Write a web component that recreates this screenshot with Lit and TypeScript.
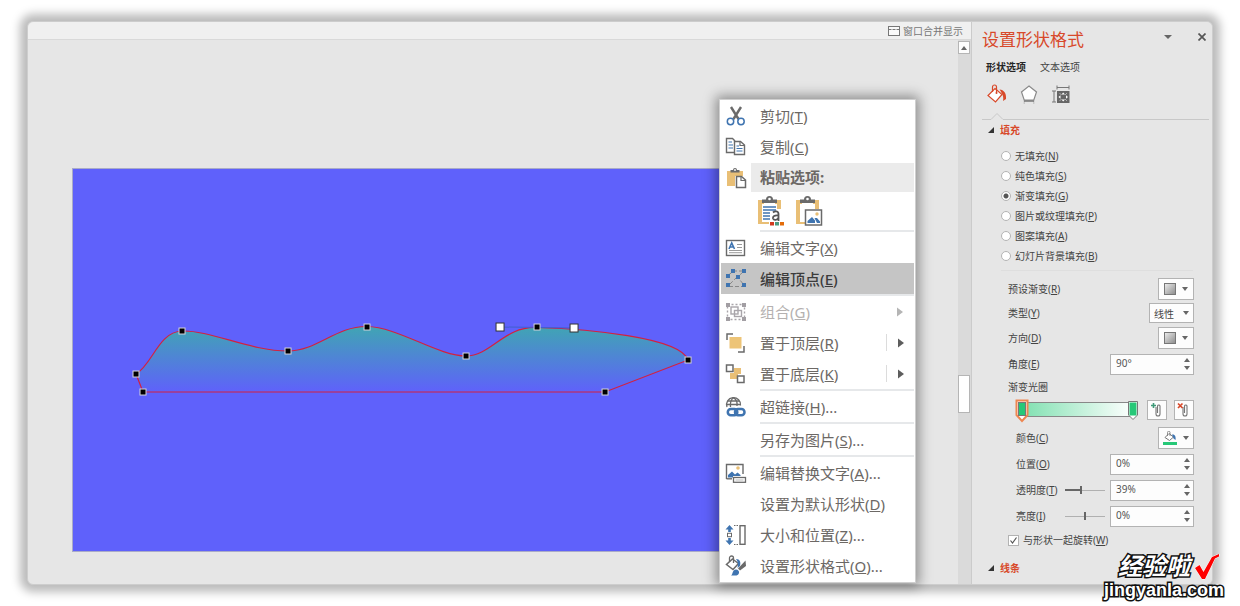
import { LitElement, html, css, svg, nothing } from "lit";
import { customElement, state } from "lit/decorators.js";
import { classMap } from "lit/directives/class-map.js";

const BLUE = "#3f74b0";
const GRAY = "#6a6a6a";
const TAN = "#e9bf76";

const icons: Record<string, unknown> = {
  cut: svg`<path d="M6 2L13.500 14M16 2L8.500 14" stroke=${GRAY} stroke-width="2.400" fill="none"/>
    <circle cx="5.500" cy="16.500" r="3.200" fill="none" stroke=${BLUE} stroke-width="1.500"/>
    <circle cx="16" cy="16.500" r="3.200" fill="none" stroke=${BLUE} stroke-width="1.500"/>`,
  copy: svg`<path d="M9 16.500H1.500V2.500H7.500L10 5" fill="none" stroke=${GRAY} stroke-width="1.400"/>
    <path d="M3.500 6H7M3.500 9H8M3.500 12H8" stroke=${BLUE} stroke-width="1.200"/>
    <path d="M9.500 5.500H15.500L19.500 9V18.500H9.500Z" fill="#fff" stroke=${GRAY} stroke-width="1.400"/>
    <path d="M15 5.500V9.500H19.500" fill="none" stroke=${GRAY} stroke-width="1.200"/>
    <path d="M11.500 10H14M11.500 12.500H17.500M11.500 15H17.500" stroke=${BLUE} stroke-width="1.200"/>`,
  paste: svg`<path d="M2 4H18V9H10V19H2Z" fill=${TAN}/><path d="M5.500 5.500V3H8A2 2 0 0 1 12 3H14.500V5.500Z" fill=${GRAY}/>
    <circle cx="10" cy="3" r=".9" fill="#fff"/>
    <path d="M11.500 9.500H16.500L20.500 13V20.500H11.500Z" fill="#fff" stroke=${GRAY} stroke-width="1.500"/>
    <path d="M16 9.500V13.500H20.500" fill="none" stroke=${GRAY} stroke-width="1.200"/>`,
  text: svg`<rect x="1.500" y="3.500" width="18" height="15" fill="#fff" stroke=${GRAY} stroke-width="1.400"/>
    <path d="M4 12L6.700 6L9.500 12M5 10H8.500" fill="none" stroke=${BLUE} stroke-width="1.600"/>
    <path d="M12 7.500H17M12 10.500H17M4 13.500H17M4 15.700H17" stroke="#9a9a9a" stroke-width="1"/>`,
  points: svg`<path d="M3.500 7L8 3.500M8 3H19M18 4L12.500 9L19 17M12 9L4 17M4 18.500H19" fill="none" stroke="#888" stroke-dasharray="4 2"/>
    <g fill=${BLUE}><rect x="6" y="1" width="4" height="4"/><rect x="17" y="1" width="4" height="4"/><rect x="1" y="6" width="4" height="4"/><rect x="11" y="7" width="4" height="4"/><rect x="1" y="15" width="4" height="4"/><rect x="17" y="15" width="4" height="4"/></g>`,
  group: svg`<g fill="none" stroke="#a9a5aa" stroke-width="1.400"><rect x="2.500" y="3.500" width="17" height="15" stroke-dasharray="2 2"/><rect x="6" y="6" width="7" height="7"/><rect x="9.500" y="9.500" width="7" height="6"/></g>
    <g fill="#a29ea3"><rect x="1" y="2" width="4" height="4"/><rect x="17" y="2" width="4" height="4"/><rect x="1" y="16" width="4" height="4"/><rect x="17" y="16" width="4" height="4"/></g>`,
  front: svg`<path d="M2 8V2H8M19 14V20H13" fill="none" stroke=${GRAY} stroke-width="1.500"/>
    <rect x="4.500" y="5" width="12" height="11.500" fill="#edc477"/>`,
  back: svg`<path d="M9 5H16V11H13V16H5V10H9Z" fill=${TAN}/>
    <g fill="#fff" stroke=${GRAY} stroke-width="1.500"><rect x="1.500" y="2" width="6.500" height="6.500"/><rect x="12.500" y="13" width="6.500" height="6.500"/></g>`,
  link: svg`<g fill="none" stroke=${GRAY} stroke-width="1.300"><path d="M2 11A7 7 0 1 1 15.500 9.500"/><path d="M5.500 11C5 6 6.500 3 8.700 1.800C11 3 12.500 6 12 10M2 8.500H15.500M3 5H14"/></g>
    <g fill="none" stroke=${BLUE} stroke-width="2.500"><rect x="2.800" y="13" width="9.500" height="6.200" rx="3"/><rect x="10" y="13" width="9.500" height="6.200" rx="3"/></g>`,
  alt: svg`<path d="M1.500 17V2.500H18V12" fill="none" stroke=${GRAY} stroke-width="1.400"/><path d="M1.500 16.800H7" stroke=${GRAY} stroke-width="1.400"/>
    <circle cx="13" cy="6" r="1.800" fill=${TAN}/><path d="M3 15.500V13L7 9.500L10 12.500L12.500 10.500L15.500 13V14H8V15.500Z" fill=${BLUE}/>
    <rect x="8.500" y="15.500" width="12" height="4.800" fill="#fff" stroke=${GRAY} stroke-width="1.300"/><path d="M10.500 18H18.500" stroke="#bbb"/>`,
  size: svg`<path d="M4.500 1L8.500 5.500H5.800V8H3.200V5.500H.5ZM4.500 21L8.500 16.500H5.800V14H3.200V16.500H.5Z" fill=${BLUE}/>
    <rect x="2.500" y="9.300" width="4" height="3.400" fill="#fff" stroke=${GRAY}/><path d="M9 1.500H14M9 20.500H14" stroke=${GRAY} stroke-dasharray="1.500 1"/>
    <rect x="15" y="1.700" width="5" height="18.600" fill="#fff" stroke=${GRAY} stroke-width="1.400"/>`,
  format: svg`<path d="M7.500 4L13.500 8.500L8 14.500L1.500 9.500Z" fill="#fff" stroke=${GRAY} stroke-width="1.500"/><path d="M4.500 7V3A2 2 0 0 1 8.500 3V8" fill="none" stroke=${GRAY} stroke-width="1.300"/>
    <path d="M11 4C15 4 16 7 15 11L12.500 13C13.500 9 13 7 11 4Z" fill=${BLUE}/><path d="M20.500 5.500L21 11L15 15.500L13 13.500Z" fill=${GRAY}/>
    <path d="M6 20.500C8 19.500 7 15 11 14.500C15 15 15 19.500 11.500 20.500Z" fill=${BLUE}/>`,
};

type Item = { icon?: string; text: string; key: string; tail?: string; sub?: "plain" | "split"; off?: boolean; on?: boolean; line?: boolean };

const items: Item[] = [
  { icon: "text", text: "编辑文字", key: "X" },
  { icon: "points", text: "编辑顶点", key: "E", on: true, line: true },
  { icon: "group", text: "组合", key: "G", sub: "plain", off: true },
  { icon: "front", text: "置于顶层", key: "R", sub: "split" },
  { icon: "back", text: "置于底层", key: "K", sub: "split", line: true },
  { icon: "link", text: "超链接", key: "H", tail: "...", line: true },
  { text: "另存为图片", key: "S", tail: "...", line: true },
  { icon: "alt", text: "编辑替换文字", key: "A", tail: "..." },
  { text: "设置为默认形状", key: "D" },
  { icon: "size", text: "大小和位置", key: "Z", tail: "..." },
  { icon: "format", text: "设置形状格式", key: "O", tail: "..." },
];

const base = css`
  * { box-sizing: border-box; }
  button, input, select { font: inherit; color: inherit; margin: 0; padding: 0; border: 0; background: none; border-radius: 0; }
  svg { display: block; }
`;

@customElement("context-menu")
class ContextMenu extends LitElement {
  static styles = [base, css`
    :host { display: block; padding: 0 1px 1px; background: #fff; border: 1px solid #cfcfcf; font-size: 15px; line-height: 20px; color: #6c6865; box-shadow: 0 0 12px 3px rgba(0, 0, 0, 0.4); }
    .row { display: grid; grid-template-columns: 30px 1fr auto; align-items: center; width: 100%; height: 31px; text-align: left; white-space: nowrap; }
    .icon { width: 22px; height: 22px; margin-left: 4px; }
    .label { padding-left: 9px; }
    .head .label { grid-column: 2 / -1; height: 29px; line-height: 29px; background: #ebebeb; font-weight: 700; }
    .row.on { background: #c5c5c5; color: #3c3c3c; }
    .row.on .label { font-weight: 500; }
    .row.off { color: #b5b1b0; }
    .line { height: 2px; margin: 0 0 0 39px; border: 0; background: #e6e8ea; }
    .options { display: flex; gap: 8px; height: 37px; padding: 3px 0 0 35px; }
    .options button { width: 30px; height: 32px; }
    .arrow { display: flex; align-items: center; justify-content: center; width: 28px; height: 17px; }
    .split { border-left: 1px solid #dcdcdc; }
  `];

  private icon(name?: string) {
    return name ? html`<svg class="icon" viewBox="0 0 22 22" aria-hidden="true">${icons[name]}</svg>` : html`<span></span>`;
  }

  private item(i: Item) {
    return html`
      <button class=${classMap({ row: true, on: !!i.on, off: !!i.off })} role="menuitem" ?disabled=${!!i.off}>
        ${this.icon(i.icon)}
        <span class="label">${i.text}(<u>${i.key}</u>)${i.tail ?? ""}</span>
        ${i.sub ? html`<span class=${classMap({ arrow: true, split: i.sub === "split" })}><svg width="6" height="10" viewBox="0 0 6 10"><path d="M0 0.500L6 5L0 9.500Z" fill=${i.off ? "#b5b5b5" : "#5d5d5d"}/></svg></span>` : nothing}
      </button>
      ${i.line ? html`<hr class="line">` : nothing}`;
  }

  render() {
    const board = svg`<path d="M2 4H8V8H6V26H13V28H2ZM19 4H25V13H21V8H19Z" fill=${TAN}/><path d="M6 7V3.500H10A3.500 3.500 0 0 1 17 3.500H21V7Z" fill=${GRAY}/><circle cx="13.500" cy="3" r="1.300" fill="#fff"/>`;
    return html`
      ${this.item({ icon: "cut", text: "剪切", key: "T" })}
      ${this.item({ icon: "copy", text: "复制", key: "C" })}
      <div class="row head">${this.icon("paste")}<span class="label">粘贴选项:</span></div>
      <div class="options">
        <button aria-label="保留源格式"><svg width="30" height="32" viewBox="0 0 30 32">${board}
          <path d="M7 11H20M7 14H20M7 17H14M7 20H14M7 23H14" stroke=${BLUE} stroke-width="1.400"/>
          <path d="M17 16.500C19 14.500 22.500 15 22.500 18V25M22.500 19.500C18.500 19 16.500 20.500 17 22.500C18 24.800 21.500 24 22.500 21.500" fill="none" stroke="#555" stroke-width="1.800"/>
          <rect x="14" y="26" width="4" height="3.500" fill="#d13b20"/><rect x="19" y="26" width="4" height="3.500" fill="#4c9a80"/><rect x="24" y="26" width="4" height="3.500" fill="#e36c0a"/></svg></button>
        <button aria-label="图片"><svg width="30" height="32" viewBox="0 0 30 32">${board}
          <rect x="11.500" y="14" width="16" height="15" fill="#fff" stroke=${GRAY} stroke-width="1.500"/><circle cx="23" cy="18" r="1.700" fill=${TAN}/>
          <path d="M13.500 27V25L18 21L21 24.500V27ZM20.500 22H23L26 25.500V27H23Z" fill=${BLUE}/></svg></button>
      </div>
      <hr class="line">
      ${items.map((i) => this.item(i))}`;
  }
}

@customElement("format-pane")
class FormatPane extends LitElement {
  @state() private fill = "G";
  @state() private alpha = 39;

  static styles = [base, css`
    :host { display: block; background: #e6e6e6; border-left: 1px solid #cbcbcb; font-size: 10px; line-height: 20px; color: #444; }
    .title { display: flex; align-items: center; height: 36px; padding-left: 10px; }
    h2 { flex: 1; margin: 0; font-size: 17px; font-weight: 400; color: #d8492a; }
    .caret, .close { display: grid; place-items: center; width: 20px; height: 20px; margin-bottom: 6px; }
    .caret { margin-right: 14px; }
    .tabs { display: flex; gap: 14px; height: 18px; line-height: 18px; padding-left: 14px; }
    .tabs .sel { font-weight: 700; color: #262626; }
    .kinds { display: flex; gap: 12px; height: 36px; padding: 8px 0 0 15px; }
    .kinds button { width: 20px; height: 22px; }
    .notch { display: flex; align-items: flex-end; height: 8px; margin: 0 3px 0 10px; }
    .notch i { height: 1px; background: #c8c8c8; width: 9px; }
    .notch .rest { flex: 1; }
    .section { display: flex; align-items: center; gap: 6px; padding-left: 16px; font-weight: 700; color: #d8492a; }
    .fills { padding: 6px 0 0 29px; border: 0; margin: 0; }
    .fills label { display: flex; align-items: center; gap: 4px; height: 20px; }
    .fills input { appearance: none; width: 10px; height: 10px; border: 1px solid #b4b4b4; border-radius: 50%; background: #fff; }
    .fills input:checked { background: radial-gradient(circle, #555 2px, #fff 3px); }
    .rule { height: 1px; margin: 4px 19px 6px 29px; border: 0; background: #dedede; }
    .row { display: flex; align-items: center; justify-content: space-between; height: 26px; padding: 0 18px 0 36px; }
    .short { height: 24px; }
    .caption { height: 20px; }
    .in { padding-left: 44px; }
    .box { background: #fdfdfd; border: 1px solid #b3b3b3; }
    .pick { display: flex; align-items: center; justify-content: center; gap: 6px; width: 36px; height: 22px; }
    .drop { position: relative; width: 45px; height: 20px; display: grid; align-items: center; }
    .drop select { appearance: none; width: 100%; height: 18px; padding-left: 4px; }
    .drop svg { position: absolute; right: 4px; top: 7px; pointer-events: none; }
    .spin { display: flex; width: 84px; height: 21px; }
    .spin input { flex: 1; min-width: 0; padding-left: 5px; height: 17px; color: #555; }
    .steps { display: grid; width: 13px; padding: 1px 0; }
    .steps button { display: grid; place-items: center; }
    .range { appearance: none; width: 40px; height: 12px; margin: 0 5px 0 auto; background: linear-gradient(#b0b0b0, #b0b0b0) center / 100% 1px no-repeat; }
    .dark { background: linear-gradient(#666, #666) left center / 40% 2px no-repeat, linear-gradient(#b0b0b0, #b0b0b0) center / 100% 1px no-repeat; }
    .range::-webkit-slider-thumb { appearance: none; width: 2px; height: 8px; background: #666; }
    .stops { display: flex; align-items: center; height: 26px; gap: 7px; padding: 0 18px 0 41px; margin-bottom: 2px; }
    .stops .bar { flex: 1; min-width: 0; }
    .tool { display: grid; place-items: center; width: 20px; height: 20px; }
    .check { display: flex; align-items: center; gap: 4px; height: 22px; padding-left: 36px; margin-bottom: 7px; }
    .tick { position: relative; display: grid; }
    .tick input { appearance: none; width: 11px; height: 11px; border: 1px solid #b3b3b3; background: #fff; }
    .tick svg { position: absolute; left: 2px; top: 2px; display: none; pointer-events: none; }
    .tick input:checked + svg { display: block; }
  `];

  private down = () => html`<svg width="6" height="4" viewBox="0 0 6 4"><path d="M0 0H6L3 4Z" fill="#666"/></svg>`;
  private up = () => html`<svg width="6" height="4" viewBox="0 0 6 4"><path d="M0 4H6L3 0Z" fill="#666"/></svg>`;
  private fold = () => html`<svg width="6" height="6" viewBox="0 0 6 6"><path d="M6 0V6H0Z" fill="#333"/></svg>`;

  private swatch(id: string) {
    return html`<button class="box pick" id=${id}>
      <svg width="12" height="12" viewBox="0 0 12 12"><defs><linearGradient id="g" x2="1" y2="1"><stop stop-color="#eee"/><stop offset="1" stop-color="#8a8a8a"/></linearGradient></defs><rect x=".5" y=".5" width="11" height="11" fill="url(#g)" stroke="#777"/></svg>${this.down()}</button>`;
  }

  private spin(id: string, value: string) {
    return html`<span class="box spin"><input id=${id} type="text" .value=${value}>
      <span class="steps"><button aria-label="增加">${this.up()}</button><button aria-label="减少">${this.down()}</button></span></span>`;
  }

  render() {
    const fills = [["无填充", "N"], ["纯色填充", "S"], ["渐变填充", "G"], ["图片或纹理填充", "P"], ["图案填充", "A"], ["幻灯片背景填充", "B"]];
    const clip = svg`<path d="M7 6V13A2 2 0 0 0 11 13V5A1.300 1.300 0 0 0 8.500 5V12" fill="none" stroke="#777" stroke-width="1.100"/>`;
    return html`
      <div class="title"><h2>设置形状格式</h2>
        <button class="caret" aria-label="选项"><svg width="8" height="4" viewBox="0 0 8 4"><path d="M0 0H8L4 4Z" fill="#666"/></svg></button>
        <button class="close" aria-label="关闭"><svg width="8" height="8" viewBox="0 0 8 8"><path d="M.5 .5L7.500 7.500M7.500 .5L.5 7.500" stroke="#555" stroke-width="1.700"/></svg></button></div>
      <div class="tabs"><button class="sel">形状选项</button><button>文本选项</button></div>
      <div class="kinds">
        <button aria-label="填充与线条"><svg width="20" height="22" viewBox="0 0 20 22"><path d="M8 4.500L15 10.500L8.500 18L1 11.500Z" fill="#fff" stroke="#d8492a" stroke-width="1.200"/><path d="M5.500 8V3A2 2 0 0 1 9.500 3V9" fill="none" stroke="#d8492a" stroke-width="1.200"/><circle cx="9.500" cy="9" r="1" fill="#d8492a"/><path d="M12.500 5.500C17 6 19.500 9 19 15L16 17C17 13 15.500 10 12.500 5.500Z" fill="#d8492a"/></svg></button>
        <button aria-label="效果"><svg width="20" height="22" viewBox="0 0 20 22"><path d="M10 2L17.500 8L14.800 16H5.200L2.500 8Z" fill="#fff" stroke="#8a8a8a" stroke-width="1.200"/><path d="M5.200 16V20M14.800 16V20" stroke="#bbb"/><path d="M5 17H15" stroke="#777" stroke-width="1.500"/></svg></button>
        <button aria-label="大小与属性"><svg width="20" height="22" viewBox="0 0 20 22"><path d="M6 3.500H18M6 1.500V5.500M18 1.500V5.500M3 7V18M1 7H5M1 18H5" stroke="#777" fill="none"/><rect x="6" y="7" width="12.500" height="12" fill="#666"/><path d="M12.200 8.500L14 10.500H10.500ZM12.200 17.500L14 15.500H10.500ZM7.500 13L9.500 11.200V14.800ZM17 13L15 11.200V14.800Z" fill="#fff"/><path d="M9 9.500L10 10.500M15.500 9.500L14.500 10.500M9 16.500L10 15.500M15.500 16.500L14.500 15.500" stroke="#fff"/></svg></button>
      </div>
      <div class="notch"><i></i><svg width="12" height="8" viewBox="0 0 12 8"><path d="M0 7.500L6 1.500L12 7.500" fill="none" stroke="#c8c8c8"/></svg><i class="rest"></i></div>
      <div class="section">${this.fold()}填充</div>
      <fieldset class="fills">
        ${fills.map(([t, k]) => html`<label><input type="radio" name="fill" .checked=${this.fill === k} @change=${() => (this.fill = k)}><span>${t}(<u>${k}</u>)</span></label>`)}
      </fieldset>
      <hr class="rule">
      <div class="row short"><label for="preset">预设渐变(<u>R</u>)</label>${this.swatch("preset")}</div>
      <div class="row short"><label for="type">类型(<u>Y</u>)</label><span class="box drop"><select id="type"><option>线性</option></select>${this.down()}</span></div>
      <div class="row"><label for="dir">方向(<u>D</u>)</label>${this.swatch("dir")}</div>
      <div class="row"><label for="angle">角度(<u>E</u>)</label>${this.spin("angle", "90°")}</div>
      <div class="row caption">渐变光圈</div>
      <div class="stops">
        <svg class="bar" height="26" viewBox="0 0 126 26" preserveAspectRatio="xMinYMid"><defs><linearGradient id="b"><stop stop-color="#7fe0b0"/><stop offset="1" stop-color="#fff"/></linearGradient></defs>
          <rect x="8.500" y="5.500" width="112" height="14" fill="url(#b)" stroke="#888"/>
          <path d="M3.500 3.500H14.500V18L9 24L3.500 18Z" fill="#fff" stroke="#ee8650" stroke-width="2"/><rect x="5.500" y="5.500" width="7" height="13" fill="#27c878" stroke="#777"/>
          <path d="M115.500 4.500H124.500V18L120 22.500L115.500 18Z" fill="#fff" stroke="#777"/><rect x="116.500" y="5.500" width="7" height="13" fill="#27c878"/></svg>
        <button class="box tool" aria-label="添加渐变光圈"><svg width="16" height="18" viewBox="0 0 16 18">${clip}<path d="M4.500 2V7M2 4.500H7" stroke="#3f9a78" stroke-width="1.600"/></svg></button>
        <button class="box tool" aria-label="删除渐变光圈"><svg width="16" height="18" viewBox="0 0 16 18">${clip}<path d="M2 2.500L6.500 7M6.500 2.500L2 7" stroke="#d8492a" stroke-width="1.700"/></svg></button>
      </div>
      <div class="row in"><label for="color">颜色(<u>C</u>)</label><button id="color" class="box pick">
        <svg width="14" height="14" viewBox="0 0 14 14"><path d="M6 2.500L10.500 6L6.500 9.500L2 6.500Z" fill="#fff" stroke="#777"/><path d="M4.500 5V1.500A1.200 1.200 0 0 1 7 1.500V5" fill="none" stroke="#777" stroke-width=".8"/><path d="M9 3.500C12 3 13 5.500 12.500 9L10.500 7.500Z" fill="#3f74b0"/><rect y="11" width="14" height="3" fill="#27c878"/></svg>${this.down()}</button></div>
      <div class="row in"><label for="pos">位置(<u>O</u>)</label>${this.spin("pos", "0%")}</div>
      <div class="row in"><label for="alpha">透明度(<u>T</u>)</label><input class="range dark" type="range" aria-label="透明度" .value=${String(this.alpha)} @input=${(e: Event) => (this.alpha = +(e.target as HTMLInputElement).value)}>${this.spin("alpha", `${this.alpha}%`)}</div>
      <div class="row in"><label for="light">亮度(<u>I</u>)</label><input class="range" type="range" aria-label="亮度" min="-100" max="100" value="0">${this.spin("light", "0%")}</div>
      <label class="check"><span class="tick"><input type="checkbox" checked><svg width="7" height="7" viewBox="0 0 7 7"><path d="M.5 3.500L2.500 6L6.500 .5" fill="none" stroke="#555" stroke-width="1.200"/></svg></span><span>与形状一起旋转(<u>W</u>)</span></label>
      <div class="section">${this.fold()}线条</div>`;
  }
}

@customElement("app-root")
class AppRoot extends LitElement {
  static styles = [base, css`
    :host { display: block; padding: 21px 27px; background: #fff; font-family: "Noto Sans", "Noto Sans CJK SC", sans-serif; }
    .window { position: relative; display: grid; grid-template-columns: minmax(0, 1fr) 241px; border: 1px solid #cdcdcd; border-radius: 6px; background: #e6e6e6; box-shadow: 0 0 10px 7px rgba(0, 0, 0, 0.27); }
    .main { position: relative; display: flex; flex-direction: column; }
    .bar { display: flex; align-items: center; justify-content: flex-end; height: 18px; padding-right: 8px; background: #f0f0f0; border-bottom: 1px solid #d9d9d9; border-radius: 6px 0 0 0; font-size: 10px; line-height: 16px; color: #777; }
    .merge { display: flex; align-items: center; gap: 3px; }
    .work { flex: 1; display: flex; }
    .stage { flex: 1; padding: 128px 0 32px 44px; }
    .slide { width: 78%; border: 1px solid #a9abc8; background: #5f61fb; }
    .slide svg { width: 100%; height: auto; }
    .scroll { display: flex; flex-direction: column; width: 13px; padding: 1px 1px 0 0; background: #dadada; }
    .scroll button { display: grid; place-items: center; height: 13px; background: #fdfdfd; border: 1px solid #b5b5b5; }
    .before { flex: 322; }
    .thumb { flex: 36; background: #fff; border: 1px solid #b5b5b5; }
    .after { flex: 172; }
    .menu { position: absolute; left: 691px; top: 77px; width: 197px; }
    format-pane { border-radius: 0 6px 6px 0; padding-bottom: 5px; }
    .mark { position: absolute; right: -12px; bottom: -16px; display: grid; justify-items: end; color: #fff; font-family: "Liberation Sans", "Noto Sans CJK SC", sans-serif; font-weight: 700; paint-order: stroke fill; -webkit-text-stroke: 3px #111; pointer-events: none; }
    .name { display: flex; align-items: center; gap: 4px; font-size: 24px; line-height: 24px; font-style: italic; margin-right: 4px; }
    .site { font-size: 18px; line-height: 20px; }
  `];

  render() {
    const nodes = [[136, 375], [182, 332], [288, 352], [367, 328], [466, 357], [537, 328], [688, 361], [605, 393], [143, 393]];
    const handles = [[500, 328], [574, 329]];
    return html`
      <div class="window">
        <main class="main">
          <div class="bar"><button class="merge"><svg width="12" height="10" viewBox="0 0 12 10"><rect x=".5" y=".5" width="11" height="9" fill="#fafafa" stroke="#777"/><path d="M.5 3.500H11.500" stroke="#777" stroke-dasharray="3 1"/></svg>窗口合并显示</button></div>
          <div class="work">
            <div class="stage"><div class="slide">
              <svg viewBox="73 170 689 382" aria-label="波浪形状">
                <defs><linearGradient id="wave" x2="0" y2="1"><stop stop-color="#40a5b3"/><stop offset="1" stop-color="#5f61fb"/></linearGradient></defs>
                <path d="M143 393L136 375C153 365 158 333 182 332C210 331 250 352 288 352C317 352 336 327 367 327.500C398 328 438 357 466 357C491 357 504 327 537 328.500C585 330 680 338 688 361L605 393Z" fill="url(#wave)" stroke="#d3213f" stroke-width="1.200"/>
                <path d="M500 328L574 329" stroke="#3f60cf" stroke-width="1"/>
                ${nodes.map(([x, y]) => svg`<rect x=${x - 3} y=${y - 3} width="6" height="6" fill="#000" stroke="#d5d5dd" stroke-width="1"/>`)}
                ${handles.map(([x, y]) => svg`<rect x=${x - 4} y=${y - 4} width="8" height="8" fill="#fff" stroke="#333" stroke-width="1"/>`)}
              </svg>
            </div></div>
            <div class="scroll"><button aria-label="向上滚动"><svg width="6" height="4" viewBox="0 0 6 4"><path d="M0 4H6L3 0Z" fill="#666"/></svg></button>
              <span class="before"></span><span class="thumb"></span><span class="after"></span></div>
          </div>
          <context-menu class="menu" role="menu"></context-menu>
        </main>
        <format-pane></format-pane>
        <div class="mark"><div class="name">经验啦<svg width="26" height="26" viewBox="0 0 26 26"><path d="M1 14L5.500 11L9.500 18L18 3L25 0V2.500L21 4.500L11 25H8Z" fill="#f00" stroke="#fff" stroke-width="1"/></svg></div><div class="site">jingyanla.com</div></div>
      </div>`;
  }
}
